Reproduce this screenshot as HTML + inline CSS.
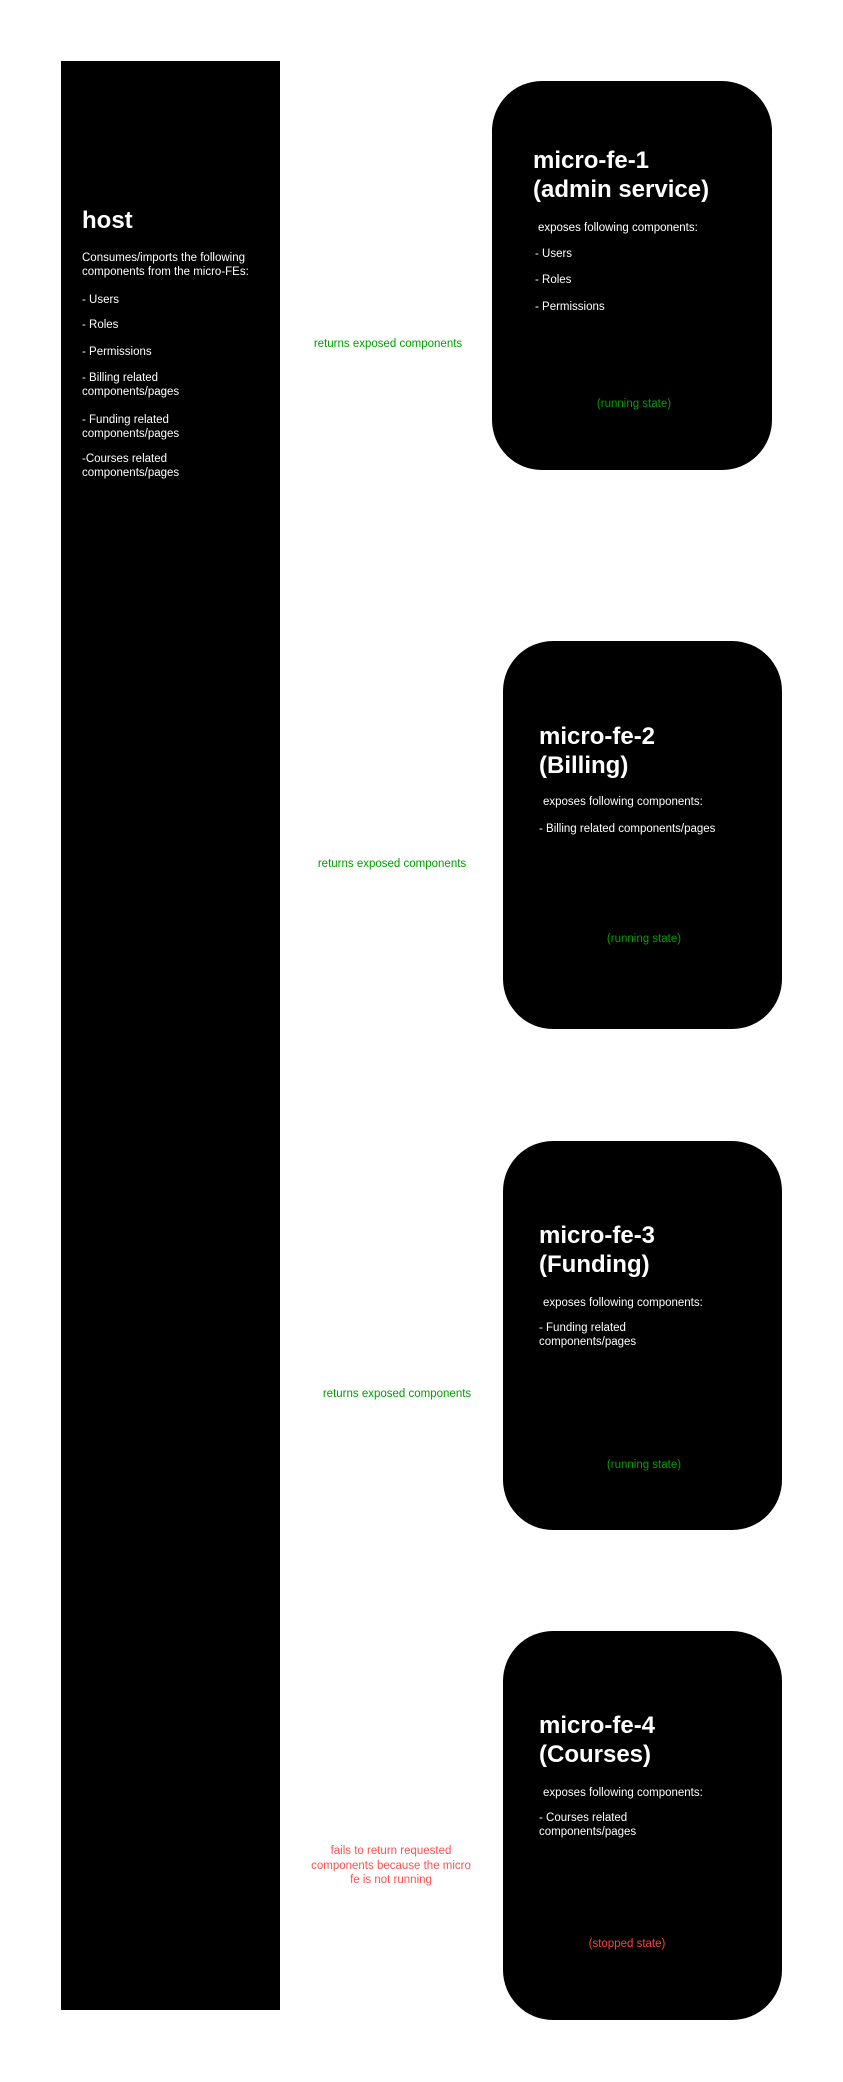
<!DOCTYPE html>
<html><head><meta charset="utf-8"><style>
*{margin:0;padding:0;box-sizing:border-box}
body{width:843px;height:2082px;background:#fff;position:relative;font-family:"Liberation Sans",Arial,sans-serif;overflow:hidden}
.b{position:absolute;background:#000}
.t{position:absolute;color:#fff;font-size:11.5px;line-height:14px;white-space:nowrap}
.h{position:absolute;color:#fff;font-size:24px;font-weight:bold;line-height:29px;white-space:nowrap}
.g{position:absolute;color:#00a000;font-size:11.5px;line-height:14px;text-align:center;white-space:nowrap}
.r{position:absolute;color:#ff5050;font-size:11.5px;line-height:14.5px;text-align:center;white-space:nowrap}
</style></head><body>
<div class="b" style="left:61px;top:61px;width:219px;height:1949px"></div>
<div class="h" style="left:82px;top:206px">host</div>
<div class="t" style="left:82px;top:251px">Consumes/imports the following<br>components from the micro-FEs:</div>
<div class="t" style="left:82px;top:293px">- Users</div>
<div class="t" style="left:82px;top:318px">- Roles</div>
<div class="t" style="left:82px;top:345px">- Permissions</div>
<div class="t" style="left:82px;top:371px">- Billing related<br>components/pages</div>
<div class="t" style="left:82px;top:413px">- Funding related<br>components/pages</div>
<div class="t" style="left:82px;top:452px">-Courses related<br>components/pages</div>

<div class="b" style="left:492px;top:81px;width:280px;height:389px;border-radius:50px"></div>
<div class="h" style="left:533px;top:146px">micro-fe-1<br>(admin service)</div>
<div class="t" style="left:538px;top:221px">exposes following components:</div>
<div class="t" style="left:535px;top:247px">- Users</div>
<div class="t" style="left:535px;top:273px">- Roles</div>
<div class="t" style="left:535px;top:300px">- Permissions</div>
<div class="g" style="left:534px;width:200px;top:397px">(running state)</div>
<div class="g" style="left:288px;width:200px;top:337px">returns exposed components</div>

<div class="b" style="left:503px;top:641px;width:279px;height:388px;border-radius:50px"></div>
<div class="h" style="left:539px;top:722px">micro-fe-2<br>(Billing)</div>
<div class="t" style="left:543px;top:795px">exposes following components:</div>
<div class="t" style="left:539px;top:822px">- Billing related components/pages</div>
<div class="g" style="left:544px;width:200px;top:932px">(running state)</div>
<div class="g" style="left:292px;width:200px;top:857px">returns exposed components</div>

<div class="b" style="left:503px;top:1141px;width:279px;height:389px;border-radius:50px"></div>
<div class="h" style="left:539px;top:1221px">micro-fe-3<br>(Funding)</div>
<div class="t" style="left:543px;top:1296px">exposes following components:</div>
<div class="t" style="left:539px;top:1321px">- Funding related<br>components/pages</div>
<div class="g" style="left:544px;width:200px;top:1458px">(running state)</div>
<div class="g" style="left:297px;width:200px;top:1387px">returns exposed components</div>

<div class="b" style="left:503px;top:1631px;width:279px;height:389px;border-radius:50px"></div>
<div class="h" style="left:539px;top:1711px">micro-fe-4<br>(Courses)</div>
<div class="t" style="left:543px;top:1786px">exposes following components:</div>
<div class="t" style="left:539px;top:1811px">- Courses related<br>components/pages</div>
<div class="r" style="left:527px;width:200px;top:1937px;color:#ff4040">(stopped state)</div>
<div class="r" style="left:291px;width:200px;top:1844px">fails to return requested<br>components because the micro<br>fe is not running</div>
</body></html>
